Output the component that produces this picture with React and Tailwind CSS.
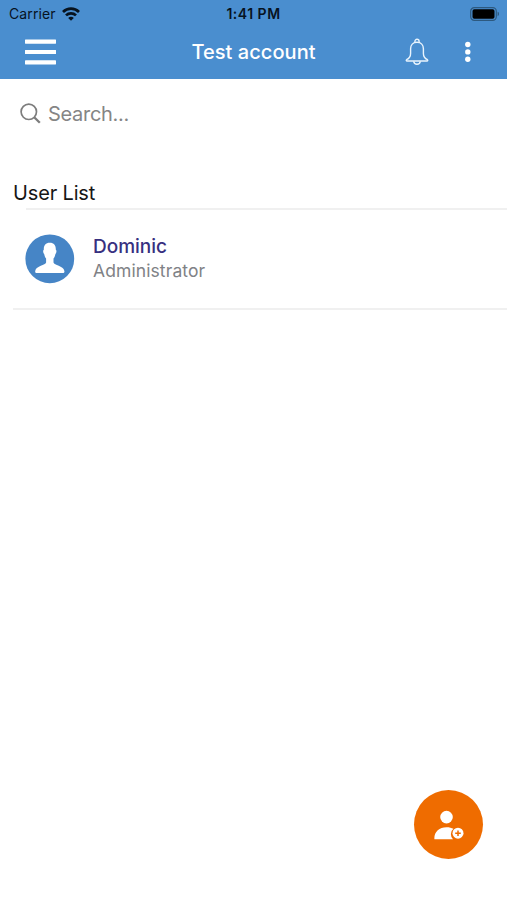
function WifiIcon() {
  return (
    <svg width="18" height="14" viewBox="0 0 18 14" fill="none" stroke="#07131f" strokeWidth="2.7">
      <path d="M1 5a11.4 11.4 0 0 1 16 0" />
      <path d="M4 8.4a7.1 7.1 0 0 1 10 0" />
      <path d="M9 13.8 6.2 10.9a3.9 3.9 0 0 1 5.6 0Z" fill="#07131f" stroke="none" />
    </svg>
  );
}

function BatteryIcon() {
  return (
    <svg width="30" height="14" viewBox="0 0 30 14">
      <rect x="0.7" y="0.7" width="25.6" height="12.6" rx="3.6" fill="none" stroke="#2d597f" strokeWidth="1.2" />
      <rect x="2.5" y="2.2" width="22" height="9.6" rx="1.8" fill="#000" />
      <path d="M27.6 4.8c1.9.6 1.9 3.8 0 4.4Z" fill="#2d597f" />
    </svg>
  );
}

function BellIcon() {
  return (
    <svg width="24" height="28" viewBox="0 0 24 28" fill="none" stroke="#e9f4fd" strokeWidth="1.4" strokeLinejoin="round">
      <path d="M9.9 4.3v-.9a2.1 2.1 0 0 1 4.2 0v.9" />
      <path d="M12 4.2c-4.1 0-6.4 2.9-6.4 6.6v4.6c0 3.6-1.5 5-4 6.3-.6.5-.4 1.3.4 1.3h20c.8 0 1-.8.4-1.3-2.5-1.3-4-2.7-4-6.3v-4.6c0-3.7-2.3-6.6-6.4-6.6Z" />
      <path d="M8.7 23.2c.2 2 1.5 3.1 3.3 3.1s3.1-1.1 3.3-3.1" />
    </svg>
  );
}

function SearchIcon() {
  return (
    <svg width="22" height="22" viewBox="0 0 22 22" fill="none" stroke="#7d7d7d">
      <circle cx="8.8" cy="8.8" r="7.7" strokeWidth="1.7" />
      <path d="m14.2 14.2 5.6 5.6" strokeWidth="2.3" />
    </svg>
  );
}

function Avatar() {
  return (
    <svg width="50" height="50" viewBox="0 0 50 50">
      <circle cx="24.8" cy="24.8" r="24.4" fill="#4685c6" />
      <path
        d="M24.8 8.8c-4.3 0-6.2 2.8-6 7-1 .3-.8 3.2.4 4.1.4 2.2 1 3.5 1.9 4.6v4.1c-.6 3-9.8 3-10.9 8.3-.2 1.4.4 2.2 1.8 2.2h25.6c1.4 0 2-.8 1.8-2.2-1.1-5.3-10.3-5.3-10.9-8.3v-4.1c.9-1.1 1.5-2.4 1.9-4.6 1.2-.9 1.4-3.8.4-4.1.2-4.2-1.7-7-6-7Z"
        fill="#fff"
      />
    </svg>
  );
}

function AddUserIcon() {
  return (
    <svg width="30" height="30" viewBox="0 0 30 30">
      <circle cx="12.5" cy="7.1" r="6.3" fill="#fff" />
      <path d="M.4 29.2c-.5-7.1 4.6-12 12.2-12 2.7 0 5 .6 6.8 1.6a7 7 0 0 0-.4 10.4Z" fill="#fff" />
      <circle cx="24" cy="23.2" r="5.5" fill="#fff" />
      <path d="M24 20.4v5.6M21.2 23.2h5.6" stroke="#ef6c00" strokeWidth="1.5" />
    </svg>
  );
}

export default function App() {
  return (
    <div className="relative flex h-[900px] w-[507px] flex-col overflow-hidden bg-white font-['Inter','Liberation_Sans',sans-serif]">
      <header className="h-[79px] bg-[#4a8ecf]">
        <div className="grid h-[26px] grid-cols-3 items-center pt-[1px] pr-[7px] pl-[9px] text-[14px] leading-[26px] text-[#07131f]">
          <div className="flex items-center gap-[6px]">
            <span className="text-[14px] tracking-[0.12px]">Carrier</span>
            <WifiIcon />
          </div>
          <span className="pr-[2px] text-center font-semibold tracking-[0.5px]">1:41 PM</span>
          <div className="flex justify-end">
            <BatteryIcon />
          </div>
        </div>

        <div className="grid h-[52px] grid-cols-[1fr_auto_1fr] items-center">
          <button className="ml-[25px] w-[31px]" aria-label="Menu">
            <svg width="31" height="26" viewBox="0 0 31 26" fill="#fff" className="block">
              <rect y="0.5" width="31" height="4.2" rx="0.4" />
              <rect y="10.9" width="31" height="4.2" rx="0.4" />
              <rect y="21.3" width="31" height="4.2" rx="0.4" />
            </svg>
          </button>
          <h1 className="text-[20px] font-medium tracking-[0.05px] text-white">Test account</h1>
          <div className="flex items-center justify-end gap-[36px] pr-[36px]">
            <button aria-label="Notifications">
              <BellIcon />
            </button>
            <button aria-label="More">
              <svg width="6" height="22" viewBox="0 0 6 22" fill="#fff" className="block">
                <circle cx="2.8" cy="3.5" r="2.7" />
                <circle cx="2.8" cy="10.9" r="2.7" />
                <circle cx="2.8" cy="18.3" r="2.7" />
              </svg>
            </button>
          </div>
        </div>
      </header>

      <div className="flex h-[70px] items-center gap-[6px] pl-[20px] text-[20px] text-[#858585]">
        <SearchIcon />
        <span className="tracking-[-0.3px]">Search...</span>
      </div>

      <main className="pt-[28px]">
        <h2 className="pt-[1px] pl-[13px] text-[20px] leading-[30px] tracking-[-0.15px] text-[#161616]">User List</h2>
        <div className="ml-[26px] h-[2px] bg-[#f0f0f0]" />
        <div className="flex h-[98px] items-center gap-[18px] pl-[25px]">
          <Avatar />
          <div>
            <p className="text-[19px] leading-[24px] font-medium text-[#37307f]">Dominic</p>
            <p className="text-[17.5px] leading-[24px] tracking-[0.1px] text-[#7f8286]">Administrator</p>
          </div>
        </div>
        <div className="ml-[13px] h-[2px] bg-[#f0f0f0]" />
      </main>

      <button
        className="absolute right-[24px] bottom-[41px] flex size-[69px] items-center justify-center rounded-full bg-[#ef6c00]"
        aria-label="Add user"
      >
        <AddUserIcon />
      </button>
    </div>
  );
}
